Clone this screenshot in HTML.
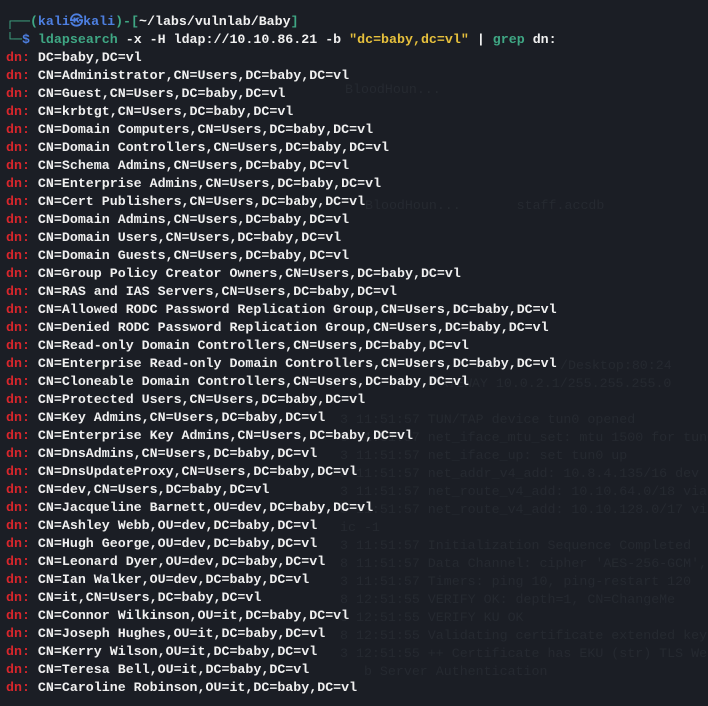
<!DOCTYPE html>
<html><head><meta charset="utf-8"><style>
html,body{margin:0;padding:0;background:#1b1e25;width:708px;height:706px;overflow:hidden}
body{position:relative;font-family:"Liberation Mono","DejaVu Sans Mono",monospace;font-size:13.3px;font-weight:bold}
.l{position:absolute;left:6px;white-space:pre;line-height:18px;color:#f0f0f0}
.bg{position:absolute;white-space:pre;line-height:18px;color:#252930;font-weight:normal}
.r{color:#d7262c}.g{color:#3fa784}.b{color:#4d7fe0}.y{color:#e6c03c}.w{color:#f0f0f0}
</style></head><body>
<div class="bg" style="left:345px;top:81px">BloodHoun...</div>
<div class="bg" style="left:365px;top:197px">BloodHoun...       staff.accdb</div>
<div class="bg" style="left:560px;top:357px">/Desktop:80:24</div>
<div class="bg" style="left:440px;top:375px">ATEWAY 10.0.2.1/255.255.255.0</div>
<div class="bg" style="left:340px;top:411px">3 11:51:57 TUN/TAP device tun0 opened
8 11:51:57 net_iface_mtu_set: mtu 1500 for tun0
3 11:51:57 net_iface_up: set tun0 up
8 11:51:57 net_addr_v4_add: 10.8.4.135/16 dev tun0
3 11:51:57 net_route_v4_add: 10.10.64.0/18 via 10
8 11:51:57 net_route_v4_add: 10.10.128.0/17 via 1
ic -1
3 11:51:57 Initialization Sequence Completed
8 11:51:57 Data Channel: cipher 'AES-256-GCM', p
3 11:51:57 Timers: ping 10, ping-restart 120
8 12:51:55 VERIFY OK: depth=1, CN=ChangeMe
3 12:51:55 VERIFY KU OK
8 12:51:55 Validating certificate extended key u
3 12:51:55 ++ Certificate has EKU (str) TLS Web
   b Server Authentication</div>
<div class="l" style="top:13px"><span class="g">┌──(</span><span class="b">kali㉿kali</span><span class="g">)-[</span><span class="w">~/labs/vulnlab/Baby</span><span class="g">]</span>
<span class="g">└─</span><span class="b">$ </span><span class="g">ldapsearch</span> -x -H ldap://10.10.86.21 -b <span class="y">"dc=baby,dc=vl"</span> | <span class="g">grep</span> dn:</div>
<div class="l" style="top:49px"><span class="r">dn:</span> DC=baby,DC=vl
<span class="r">dn:</span> CN=Administrator,CN=Users,DC=baby,DC=vl
<span class="r">dn:</span> CN=Guest,CN=Users,DC=baby,DC=vl
<span class="r">dn:</span> CN=krbtgt,CN=Users,DC=baby,DC=vl
<span class="r">dn:</span> CN=Domain Computers,CN=Users,DC=baby,DC=vl
<span class="r">dn:</span> CN=Domain Controllers,CN=Users,DC=baby,DC=vl
<span class="r">dn:</span> CN=Schema Admins,CN=Users,DC=baby,DC=vl
<span class="r">dn:</span> CN=Enterprise Admins,CN=Users,DC=baby,DC=vl
<span class="r">dn:</span> CN=Cert Publishers,CN=Users,DC=baby,DC=vl
<span class="r">dn:</span> CN=Domain Admins,CN=Users,DC=baby,DC=vl
<span class="r">dn:</span> CN=Domain Users,CN=Users,DC=baby,DC=vl
<span class="r">dn:</span> CN=Domain Guests,CN=Users,DC=baby,DC=vl
<span class="r">dn:</span> CN=Group Policy Creator Owners,CN=Users,DC=baby,DC=vl
<span class="r">dn:</span> CN=RAS and IAS Servers,CN=Users,DC=baby,DC=vl
<span class="r">dn:</span> CN=Allowed RODC Password Replication Group,CN=Users,DC=baby,DC=vl
<span class="r">dn:</span> CN=Denied RODC Password Replication Group,CN=Users,DC=baby,DC=vl
<span class="r">dn:</span> CN=Read-only Domain Controllers,CN=Users,DC=baby,DC=vl
<span class="r">dn:</span> CN=Enterprise Read-only Domain Controllers,CN=Users,DC=baby,DC=vl
<span class="r">dn:</span> CN=Cloneable Domain Controllers,CN=Users,DC=baby,DC=vl
<span class="r">dn:</span> CN=Protected Users,CN=Users,DC=baby,DC=vl
<span class="r">dn:</span> CN=Key Admins,CN=Users,DC=baby,DC=vl
<span class="r">dn:</span> CN=Enterprise Key Admins,CN=Users,DC=baby,DC=vl
<span class="r">dn:</span> CN=DnsAdmins,CN=Users,DC=baby,DC=vl
<span class="r">dn:</span> CN=DnsUpdateProxy,CN=Users,DC=baby,DC=vl
<span class="r">dn:</span> CN=dev,CN=Users,DC=baby,DC=vl
<span class="r">dn:</span> CN=Jacqueline Barnett,OU=dev,DC=baby,DC=vl
<span class="r">dn:</span> CN=Ashley Webb,OU=dev,DC=baby,DC=vl
<span class="r">dn:</span> CN=Hugh George,OU=dev,DC=baby,DC=vl
<span class="r">dn:</span> CN=Leonard Dyer,OU=dev,DC=baby,DC=vl
<span class="r">dn:</span> CN=Ian Walker,OU=dev,DC=baby,DC=vl
<span class="r">dn:</span> CN=it,CN=Users,DC=baby,DC=vl
<span class="r">dn:</span> CN=Connor Wilkinson,OU=it,DC=baby,DC=vl
<span class="r">dn:</span> CN=Joseph Hughes,OU=it,DC=baby,DC=vl
<span class="r">dn:</span> CN=Kerry Wilson,OU=it,DC=baby,DC=vl
<span class="r">dn:</span> CN=Teresa Bell,OU=it,DC=baby,DC=vl
<span class="r">dn:</span> CN=Caroline Robinson,OU=it,DC=baby,DC=vl</div>
</body></html>
